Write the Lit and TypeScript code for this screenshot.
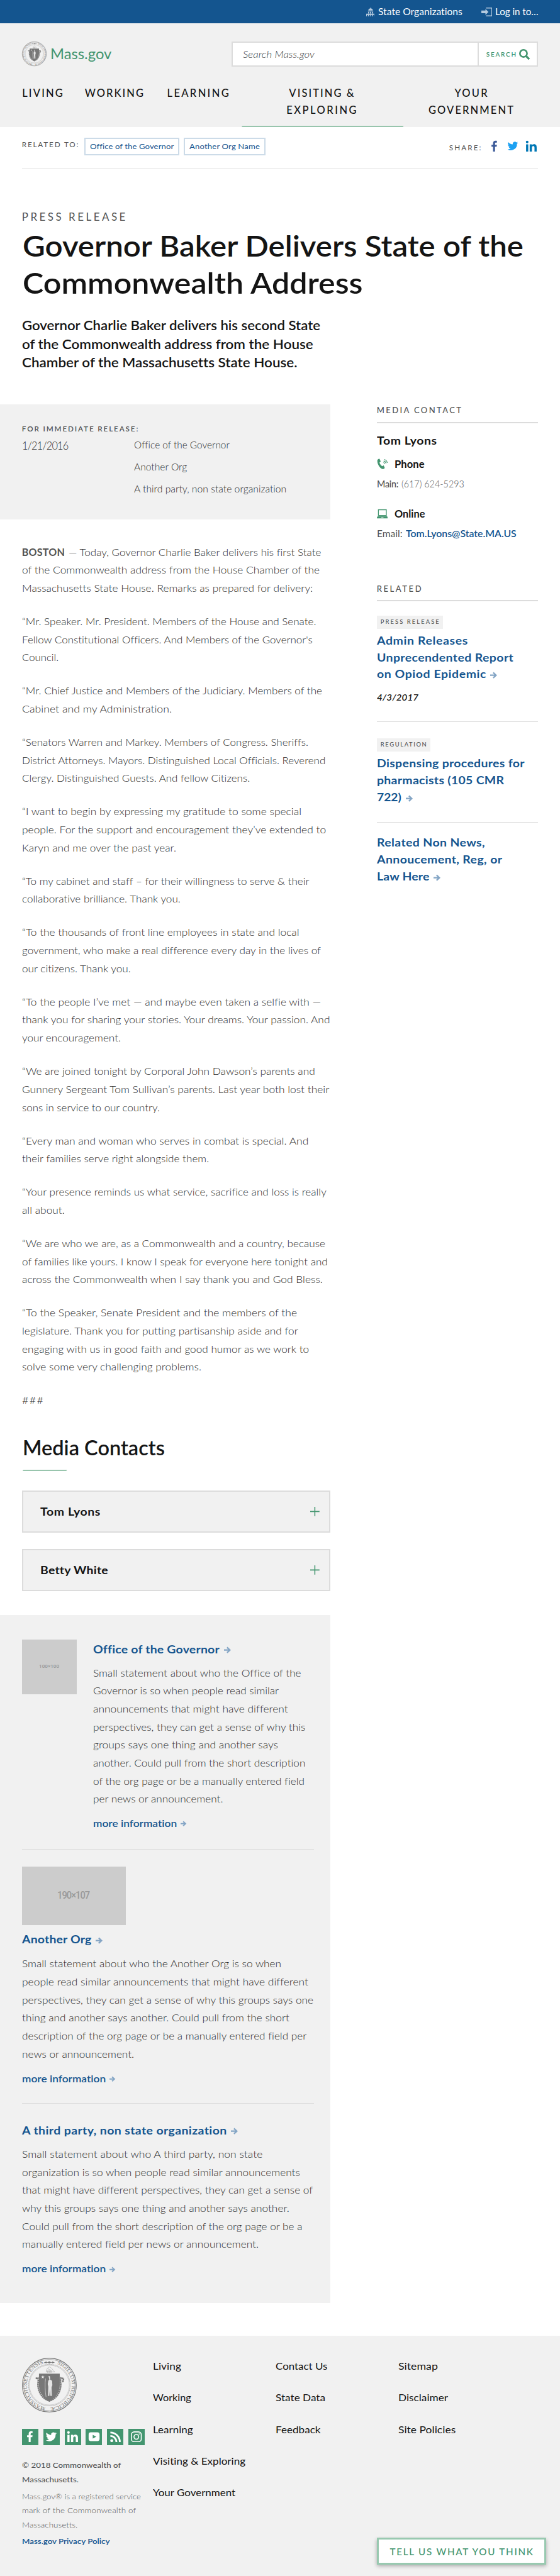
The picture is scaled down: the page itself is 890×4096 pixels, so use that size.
import { LitElement, html, css, nothing, TemplateResult } from "lit";
import { customElement, property } from "lit/decorators.js";

type Line = [string, number];

/** One line of text fitted to a set measure: capitals are tracked, mixed case is widened. */
@customElement("fit-line")
class FitLine extends LitElement {
  @property() text = "";
  @property({ type: Number }) w = 0;
  static styles = css`
    :host { display: block; white-space: nowrap; font-variant-ligatures: none; }
    .in { display: block; width: max-content; transform-origin: 0 50%; }
  `;
  render() { return html`<span class="in">${this.text}</span>`; }
  updated() {
    const inner = this.renderRoot.querySelector(".in") as HTMLElement;
    this.style.width = `${this.w}px`;
    requestAnimationFrame(() => this.fit(inner));
  }
  private fit(inner: HTMLElement) {
    inner.style.letterSpacing = "0.001px";
    inner.style.transform = "none";
    const pad = this.getBoundingClientRect().width;
    if (!pad) return;
    const natural = (inner.getBoundingClientRect().width / pad) * this.w;
    const gaps = Math.max(1, this.text.length - 1);
    const caps = this.text === this.text.toUpperCase() && /[A-Z]{3}/.test(this.text);
    if (caps) {
      inner.style.letterSpacing = `${((this.w - natural) / gaps).toFixed(3)}px`;
      return;
    }
    const stretch = Math.min(1.12, Math.max(0.94, this.w / natural));
    inner.style.letterSpacing = `${((this.w / stretch - natural) / gaps).toFixed(3)}px`;
    inner.style.transform = `scaleX(${stretch.toFixed(4)})`;
  }
}

const t = (text: string, w: number, cls = "") =>
  html`<fit-line class=${cls} .text=${text} .w=${w}></fit-line>`;

const arrow = (size: number) => html`<svg class="arrow" width=${size} height=${size} viewBox="0 0 14 14">
  <path d="M0 7h11M6 1.8 11.6 7 6 12.2" fill="none" stroke="currentColor" stroke-width="2.8"/></svg>`;

const FB = "M13.5 22v-9h3l.5-3.6h-3.500V7.200c0-1 .4-1.700 1.800-1.700H17V2.200C16.600 2.100 15.600 2 14.400 2 11.700 2 9.900 3.600 9.900 6.700v2.700H7V13h2.900v9z";
const TW = "M22 5.900c-.7.3-1.500.6-2.400.7.9-.5 1.500-1.300 1.800-2.300-.8.5-1.700.8-2.600 1a4.100 4.100 0 0 0-7 3.700C8.400 8.800 5.400 7.200 3.400 4.700a4.100 4.100 0 0 0 1.300 5.500c-.7 0-1.300-.2-1.900-.5 0 2 1.400 3.700 3.300 4.100-.6.2-1.200.2-1.900.1.500 1.600 2 2.800 3.800 2.900A8.300 8.300 0 0 1 2 18.500 11.700 11.700 0 0 0 20 8c.8-.6 1.500-1.300 2-2.100z";
const IN = "M2.400 8.600h4V22h-4zM4.400 2a2.400 2.400 0 1 1 0 4.800 2.400 2.400 0 0 1 0-4.800zM9 8.600h3.900v1.900c.6-1.100 1.900-2.200 4-2.200 4.100 0 4.900 2.700 4.900 6.300V22h-4v-6.600c0-1.600 0-3.600-2.200-3.600-2.200 0-2.500 1.700-2.500 3.500V22H9z";

const glyph = (d: string, size = 24) =>
  html`<svg width=${size} height=${size} viewBox="0 0 24 24" fill="currentColor"><path d=${d}/></svg>`;

const seal = (size: number, id: string) => html`
  <svg class="seal" width=${size} height=${size} viewBox="0 0 100 100">
    <circle cx="50" cy="50" r="49.300" fill="none" stroke="#777" stroke-width="1.300"/>
    <circle cx="50" cy="50" r="47" fill="none" stroke="#777" stroke-width=".7"/>
    <circle cx="50" cy="50" r="38" fill="none" stroke="#8a8a8a" stroke-width="1" stroke-dasharray="1 .7"/>
    <circle cx="50" cy="50" r="36.500" fill="none" stroke="#999" stroke-width=".5"/>
    <defs>
      <path id=${id} d="M50 91A41 41 0 1 1 50.100 91"/>
    </defs>
    <text class="legend"><textPath href=${"#" + id} startOffset="7" textLength="113">MASSACHUSETTENSIS.</textPath></text>
    <text class="legend"><textPath href=${"#" + id} startOffset="143" textLength="112">SIGILLUM REIPUBLICÆ</textPath></text>
    <path d="M40 8.500l5-2v1.500h2.500a3 3 0 0 1 5 0H55V6.500l5 2-5 2V9h-2.500a3 3 0 0 1-5 0H45v1.500z" fill="#777"/>
    <path d="M44 26c1-5 3-8 5-9 3-1 6 3 8 6l3 3zM45 24h10M47 20l6 3" fill="none" stroke="#aaa" stroke-width=".8"/>
    <path d="M46 26h8" stroke="#777" stroke-width="1.500" stroke-dasharray="2 1"/>
    <path d="M25 38l4-1 1 6c-2 8 0 17 5 25 4 6 10 9 15 11 5-2 11-5 15-11 5-8 7-17 5-25l1-6 5 1-1 5-2 1" fill="none" stroke="#777" stroke-width="3" stroke-dasharray="3 .6"/>
    <path d="M31 29h38v21c0 13-8 24-19 30-11-6-19-17-19-30z" fill="#777"/>
    <path d="M38 32l.8 2.200h2.400l-1.900 1.500.7 2.300-2-1.400-2 1.400.7-2.300-1.900-1.500h2.400z" fill="#f1f1f1"/>
    <path d="M48.500 33l2.500 1 .5 6 3.500 2 .5 8-1.500 4 .5 16h-2.500l-1-13-1 13h-2.500l.5-17-1-5 1-6 2-2z" fill="#e4e4e4"/>
    <path d="M43 38q-2 15 1 34" fill="none" stroke="#ddd" stroke-width=".8"/>
  </svg>`;

const SPEECH: Line[][] = [
  [["of the Commonwealth address from the House Chamber of the", 544.500], ["Massachusetts State House. Remarks as prepared for delivery:", 532]],
  [["“Mr. Speaker. Mr. President. Members of the House and Senate.", 538], ["Fellow Constitutional Officers. And Members of the Governor's", 531.500], ["Council.", 67]],
  [["“Mr. Chief Justice and Members of the Judiciary. Members of the", 549], ["Cabinet and my Administration.", 274]],
  [["“Senators Warren and Markey. Members of Congress. Sheriffs.", 523.700], ["District Attorneys. Mayors. Distinguished Local Officials. Reverend", 555], ["Clergy. Distinguished Guests. And fellow Citizens.", 416.800]],
  [["“I want to begin by expressing my gratitude to some special", 511], ["people. For the support and encouragement they’ve extended to", 556], ["Karyn and me over the past year.", 282]],
  [["“To my cabinet and staff – for their willingness to serve & their", 525.400], ["collaborative brilliance. Thank you.", 289.800]],
  [["“To the thousands of front line employees in state and local", 507], ["government, who make a real difference every day in the lives of", 546.600], ["our citizens. Thank you.", 198.800]],
  [["“To the people I’ve met — and maybe even taken a selfie with —", 547], ["thank you for sharing your stories. Your dreams. Your passion. And", 563.300], ["your encouragement.", 180.800]],
  [["“We are joined tonight by Corporal John Dawson’s parents and", 536], ["Gunnery Sergeant Tom Sullivan’s parents. Last year both lost their", 562], ["sons in service to our country.", 252]],
  [["“Every man and woman who serves in combat is special. And", 524], ["their families serve right alongside them.", 342]],
  [["“Your presence reminds us what service, sacrifice and loss is really", 556.800], ["all about.", 78]],
  [["“We are who we are, as a Commonwealth and a country, because", 554.700], ["of families like yours. I know I speak for everyone here tonight and", 559], ["across the Commonwealth when I say thank you and God Bless.", 550]],
  [["“To the Speaker, Senate President and the members of the", 503], ["legislature. Thank you for putting partisanship aside and for", 505], ["engaging with us in good faith and good humor as we work to", 525], ["solve some very challenging problems.", 328]],
  [["###", 39]],
];

const ORG1: Line[] = [
  ["Small statement about who the Office of the", 380.500], ["Governor is so when people read similar", 339.700],
  ["announcements that might have different", 356.400], ["perspectives, they can get a sense of why this", 388.200],
  ["groups says one thing and another says", 338.400], ["another. Could pull from the short description", 388.200],
  ["of the org page or be a manually entered field", 386.600], ["per news or announcement.", 237.600]];
const ORG2: Line[] = [
  ["Small statement about who the Another Org is so when", 474.300], ["people read similar announcements that might have different", 523.700],
  ["perspectives, they can get a sense of why this groups says one", 533], ["thing and another says another. Could pull from the short", 489],
  ["description of the org page or be a manually entered field per", 520.500], ["news or announcement.", 205]];
const ORG3: Line[] = [
  ["Small statement about who A third party, non state", 440], ["organization is so when people read similar announcements", 508.600],
  ["that might have different perspectives, they can get a sense of", 532], ["why this groups says one thing and another says another.", 489],
  ["Could pull from the short description of the org page or be a", 512.700], ["manually entered field per news or announcement.", 432.700]];

@customElement("app-root")
class AppRoot extends LitElement {
  static styles = css`
    :host { display: block; zoom: 0.869; width: 1024.200px; height: 4714px; position: relative; overflow: hidden;
      background: #fff; color: #535353; font-family: Lato, "Open Sans", sans-serif; font-size: 18.500px; line-height: 33px; }
    * { box-sizing: border-box; }
    svg { display: block; flex: none; }
    fit-line { flex: none; }
    .b { font-weight: 700; }

    .top { height: 43px; background: #14558f; color: #fff; display: flex; justify-content: flex-end; align-items: center;
      padding-right: 40px; font-size: 17px; line-height: 43px; }
    .top svg { color: #b5cade; }
    .top .org { margin: 0 35px 0 6px; }
    .top .log { margin-left: 5px; }

    .head { height: 190px; background: #f1f1f1; padding: 33px 40px 0; }
    .brand { display: flex; height: 46px; align-items: center; }
    .name { color: #43956f; font-size: 26px; line-height: 46px; margin: 0 220px 0 7px; padding-top: 1px; }
    .search { display: flex; width: 560px; height: 46px; border: 2.400px solid #dcdcdc; background: #fff; }
    .field { width: 449px; border-right: 2.400px solid #dcdcdc; padding: 0 0 0 18px; font-style: italic; font-weight: 300; font-size: 17.500px; line-height: 42px; color: #444; }
    .go { display: flex; color: #43956f; padding: 0 0 0 14px; font-size: 11.500px; line-height: 42px; font-weight: 600; }
    .go svg { margin: 11px 0 0 6px; }
    .nav { display: grid; grid-template-columns: 114.500px 150.600px 136.400px 297px 1fr; margin-top: 33.800px; color: #141414;
      font-size: 19px; line-height: 31px; font-weight: 500; }
    .nav > fit-line { margin-left: .5px; }
    .two { display: flex; flex-direction: column; align-items: center; padding-right: 4px; }
    .two.last { padding: 0 0 0 0; }
    .mark { align-self: flex-start; width: 297px; height: 3px; background: #98c5ad; margin-top: 12.200px; clip-path: polygon(2px 0, 100% 0, calc(100% - 2px) 100%, 0 100%); }

    .rel { display: flex; align-items: flex-start; height: 77px; margin: 0 40px; border-bottom: 1px solid #dcdcdc; padding-top: 19px;
      font-size: 13.500px; line-height: 20px; }
    .rt { margin-top: 1.800px; }
    .chip { border: 2.400px solid #ccdbe8; height: 32px; line-height: 27.500px; color: #14558f; padding: 0 8px; margin-left: 8px; font-weight: 400; }
    .rt + .chip { margin-left: 11px; }
    .share { margin: 7.800px 12.500px 0 auto; }
    .soc { width: 24px; margin-top: 4px; }
    .soc.fb { color: #3b5998; margin-right: 10px; }
    .soc.tw { color: #1da1f2; margin-right: 10px; }
    .soc.li { color: #0077b5; }

    .intro { padding: 72.500px 40px 0; color: #141414; height: 430px; }
    .kind { font-size: 19.500px; line-height: 30px; color: #535353; }
    .title { font-size: 53px; line-height: 68px; margin: 3px 0 0 1px; font-weight: 600; }
    .lead { font-size: 24px; line-height: 34px; margin-top: 26.500px; font-weight: 600; }

    .cols { display: grid; grid-template-columns: 604px 295px; column-gap: 85px; }
    .release { height: 210px; background: #f1f1f1; padding: 34.800px 0 0 40px; }
    .release .lab { font-size: 13.500px; line-height: 20px; font-weight: 600; }
    .rr { display: flex; }
    .date { font-size: 20px; line-height: 30px; margin: 5.700px 120px 0 0; font-weight: 300; color: #333; }
    .orgs { font-size: 17.500px; line-height: 40px; margin-top: -.6px; font-weight: 300; color: #2c2c2c; }

    .speech, .txt { font-weight: 300; color: #2c2c2c; }
    .speech { padding: 44px 0 0 40px; }
    .para { margin-bottom: 28px; }
    .row { display: flex; gap: 7.500px; }
    .row .b { color: #535353; }
    .mc { padding: 21px 0 0 41px; color: #141414; font-size: 37px; line-height: 44px; font-weight: 600; }
    .under { width: 82px; height: 3px; background: #98c5ad; margin: 17.300px 0 35px; clip-path: polygon(2px 0, 100% 0, calc(100% - 2px) 100%, 0 100%); }
    .acc { display: flex; justify-content: space-between; align-items: center; margin: 0 0 30px 40px; height: 77px; border: 2.400px solid #dcdcdc;
      background: #f1f1f1; color: #141414; font-size: 20px; line-height: 72.500px; font-weight: 700; padding: 0 17px 0 31px; }
    .panel { background: #f1f1f1; height: 1259px; margin-top: 44px; padding: 45px 30px 0 40px; }
    .ph { background: #ccc; color: #999; display: flex; align-items: center; justify-content: center; flex: none;
      font-family: Roboto, sans-serif; font-weight: 500; }
    .ph.s { width: 100px; height: 100px; font-size: 9px; }
    .ph.l { width: 190px; height: 107px; font-size: 18px; }
    .one { display: flex; gap: 30.200px; height: 384px; border-bottom: 1px solid #dcdcdc; }
    .one .link { margin-top: 3px; }
    .link { display: flex; align-items: center; gap: 8px; color: #14558f; font-weight: 700; font-size: 20px; line-height: 30px; }
    .more { display: flex; align-items: center; gap: 7px; color: #14558f; font-weight: 600; font-size: 18px; line-height: 30px; margin-top: 13px; }
    .arrow { color: #84a5c5; margin-top: 2px; }
    .txt { margin-top: 11.500px; }
    .second { height: 465.800px; padding-top: 31px; border-bottom: 1px solid #dcdcdc; }
    .second .link { margin-top: 12.600px; }
    .second .txt { margin-top: 12.500px; }
    .third { padding-top: 34.200px; }

    .side .hd { font-size: 15px; line-height: 20px; font-weight: 500; border-bottom: 2.400px solid #dcdcdc; padding-bottom: 10.500px; margin-top: 1.200px; }
    .side .who { font-size: 20px; line-height: 30px; font-weight: 700; color: #141414; margin-top: 17.400px; }
    .sub { display: flex; align-items: center; font-size: 18.500px; line-height: 30px; font-weight: 700; color: #141414; margin-top: 12.600px; }
    .sub svg { margin-right: 12px; }
    .val { display: flex; gap: 6px; font-size: 17.500px; line-height: 30px; margin-top: 6.200px; }
    .lt { font-weight: 300; }
    .md { font-weight: 500; }
    .val + .sub { margin-top: 24.800px; }
    .blue { color: #14558f; font-weight: 600; }
    .side .hd.two2 { margin-top: 76.400px; }
    .item { border-bottom: 1px solid #dcdcdc; color: #14558f; font-weight: 700; font-size: 20px; line-height: 31px; padding-top: 26px; }
    .item.a { height: 221px; } .item.b2 { height: 183.500px; padding-top: 30px; } .item.c { border: 0; padding-top: 22.300px; }
    .tag { width: max-content; background: #f1f1f1; color: #535353; height: 24px; line-height: 23.500px; padding: 0 7px; font-size: 10.800px;
      font-weight: 500; margin-bottom: 7px; }
    .end { display: flex; align-items: center; gap: 8px; }
    .when { color: #141414; font-style: italic; font-weight: 600; font-size: 15.500px; line-height: 24px; margin-top: 14px; }

    .foot { margin-top: 60px; height: 441px; background: #f1f1f1; padding: 26.300px 40px 0; display: grid;
      grid-template-columns: 240px 224px 225px 1fr; color: #141414; font-weight: 400; font-size: 18.500px; line-height: 58px; }
    .legal { padding-top: 13.700px; font-size: 13.800px; line-height: 26px; color: #535353; font-weight: 500; }
    .seal { overflow: visible; }
    .legend { font-family: "Liberation Serif", serif; font-size: 10px; fill: #777; }
    .squares { display: flex; gap: 9px; margin: 30px 0 24.600px; }
    .sq { width: 30px; height: 30px; background: #43956f; color: #fff; display: flex; align-items: center; justify-content: center; }
    .reg { font-weight: 300; color: #555; margin: 5px 0 4px; }
    .feedback { position: absolute; left: 689px; top: 4643px; width: 310px; height: 50px; border: 3.500px solid #98c9b0; background: #fff;
      color: #43956f; font-size: 17.500px; line-height: 44px; font-weight: 500; padding-left: 20.500px; box-shadow: 0 4px 7px rgba(0,0,0,.3); }
  `;

  plus(): TemplateResult {
    return html`<svg width="17" height="17" viewBox="0 0 17 17"><path d="M0 8.500h17M8.500 0v17" stroke="#43956f" stroke-width="1.800"/></svg>`;
  }
  lines(ls: Line[]) { return ls.map(([s, w]) => t(s, w)); }
  more() { return html`<div class="more">${t("more information", 153.300)}${arrow(11)}</div>`; }

  render() {
    return html`
      <div class="top">
        <svg width="16" height="16" viewBox="0 0 16 16" fill="currentColor"><path d="M7.500 0h1v1.300A4.300 4.300 0 0 1 12.200 5.400H3.800A4.300 4.300 0 0 1 7.500 1.300zM3 6.200h10v1H3zM3.500 7.800h2v3h-2zM7 7.800h2v3H7zM10.500 7.800h2v3h-2zM0 11.200h16V16h-1.500v-2.500h-2V16h-1.700v-2.500h-2V16H7.200v-2.500h-2V16H3.500v-2.500h-2V16H0z"/></svg>
        ${t("State Organizations", 154, "org")}
        <svg width="20" height="16" viewBox="0 0 20 16" fill="none" stroke="currentColor"><path d="M8.500 .8h10.700v14.400H8.500" stroke-width="1.600"/><path d="M0 5.500h7.500V2.500L13 8l-5.500 5.500v-3H0z" fill="currentColor" stroke="none"/></svg>
        ${t("Log in to…", 79, "log")}
      </div>
      <div class="head">
        <div class="brand">
          ${seal(45, "ring-a")}${t("Mass.gov", 112, "name")}
          <div class="search">
            <div class="field">${t("Search Mass.gov", 131)}</div>
            <div class="go">${t("SEARCH", 54.500)}
              <svg width="20" height="20" viewBox="0 0 20 20" fill="none" stroke="currentColor"><circle cx="8" cy="8" r="6.500" stroke-width="3"/><path d="M12.500 12.500l6 6" stroke-width="3.800"/></svg>
            </div>
          </div>
        </div>
        <div class="nav">
          ${t("LIVING", 74.500)}${t("WORKING", 107.500)}${t("LEARNING", 113)}
          <div class="two">${t("VISITING &", 118.800)}${t("EXPLORING", 128)}<div class="mark"></div></div>
          <div class="two last">${t("YOUR", 60)}${t("GOVERNMENT", 155.500)}</div>
        </div>
      </div>
      <div class="rel">
        ${t("RELATED TO:", 103.200, "rt")}
        <div class="chip">${t("Office of the Governor", 153.400)}</div>
        <div class="chip">${t("Another Org Name", 128.800)}</div>
        ${t("SHARE:", 58.500, "share")}
        <div class="soc fb">${glyph(FB)}</div>
        <div class="soc tw">${glyph(TW, 23)}</div>
        <div class="soc li">${glyph(IN)}</div>
      </div>
      <div class="intro">
        ${t("PRESS RELEASE", 189.500, "kind")}
        <div class="title">${t("Governor Baker Delivers State of the", 916)}${t("Commonwealth Address", 622)}</div>
        <div class="lead">${t("Governor Charlie Baker delivers his second State", 545.500)}${t("of the Commonwealth address from the House", 532.500)}${t("Chamber of the Massachusetts State House.", 503.500)}</div>
      </div>
      <div class="cols">
        <div>
          <div class="release">
            ${t("FOR IMMEDIATE RELEASE:", 212.500, "lab")}
            <div class="rr">${t("1/21/2016", 85.500, "date")}
              <div class="orgs">${t("Office of the Governor", 174.800)}${t("Another Org", 97)}${t("A third party, non state organization", 278.800)}</div>
            </div>
          </div>
          <div class="speech">
            ${SPEECH.map((p, i) => html`<div class="para">
              ${i === 0 ? html`<div class="row">${t("BOSTON", 78.500, "b")}${t("— Today, Governor Charlie Baker delivers his first State", 462)}</div>` : nothing}
              ${this.lines(p)}</div>`)}
          </div>
          <div class="mc">${t("Media Contacts", 260)}<div class="under"></div></div>
          <div class="acc">${t("Tom Lyons", 109.800)}${this.plus()}</div>
          <div class="acc">${t("Betty White", 124)}${this.plus()}</div>
          <div class="panel">
            <div class="one">
              <div class="ph s">${t("100×100", 37)}</div>
              <div>
                <div class="link">${t("Office of the Governor", 231)}${arrow(13)}</div>
                <div class="txt">${this.lines(ORG1)}</div>${this.more()}
              </div>
            </div>
            <div class="second">
              <div class="ph l">${t("190×107", 60)}</div>
              <div class="link">${t("Another Org", 127)}${arrow(13)}</div>
              <div class="txt">${this.lines(ORG2)}</div>${this.more()}
            </div>
            <div class="third">
              <div class="link">${t("A third party, non state organization", 374.300)}${arrow(13)}</div>
              <div class="txt">${this.lines(ORG3)}</div>${this.more()}
            </div>
          </div>
        </div>
        <div class="side">
          <div class="hd">${t("MEDIA CONTACT", 154.500)}</div>
          ${t("Tom Lyons", 109.500, "who")}
          <div class="sub">
            <svg width="20" height="20" viewBox="0 0 20 20"><path d="M1.500 2C2.500.8 4 .5 4.800.6L7 5.500 4.800 7.500c.5 2.500 2.700 5.300 5 6.700l2.600-1.500 2 4.500c-.8 1.500-2.700 2.600-4.400 2C4.500 17.500.5 9 .8 4c0-.8.2-1.500.7-2z" fill="#43956f"/><path d="M12 7.500c1.200.2 2 1 2.300 2.300M12.300 4.800c2.400.3 4 1.800 4.500 4.200M12.700 2c3.500.3 5.800 2.500 6.300 6" fill="none" stroke="#43956f" stroke-width="1.300"/></svg>
            ${t("Phone", 54.700)}
          </div>
          <div class="val">${t("Main:", 39.600, "md")}${t("(617) 624-5293", 115, "lt")}</div>
          <div class="sub">
            <svg width="20" height="18" viewBox="0 0 20 18"><path d="M2 1h16v12H2zM3.500 2.500v9h13v-9z" fill="#43956f" fill-rule="evenodd"/><path d="M1.500 13.500h17L20 16v1.500H0V16z" fill="#43956f"/><path d="M8 16h4" stroke="#fff" stroke-width="1"/></svg>
            ${t("Online", 55.700)}
          </div>
          <div class="val">${t("Email:", 46.700)}${t("Tom.Lyons@State.MA.US", 202.300, "blue")}</div>
          <div class="hd two2">${t("RELATED", 81.500)}</div>
          <div class="item a">
            <div class="tag">${t("PRESS RELEASE", 107)}</div>
            ${t("Admin Releases", 166)}${t("Unprecendented Report", 249.500)}
            <div class="end">${t("on Opiod Epidemic", 199.600)}${arrow(13)}</div>
            ${t("4/3/2017", 76, "when")}
          </div>
          <div class="item b2">
            <div class="tag">${t("REGULATION", 84)}</div>
            ${t("Dispensing procedures for", 270)}${t("pharmacists (105 CMR", 232.500)}
            <div class="end">${t("722)", 44.700)}${arrow(13)}</div>
          </div>
          <div class="item c">${t("Related Non News,", 197.500)}${t("Annoucement, Reg, or", 229)}
            <div class="end">${t("Law Here", 96)}${arrow(13)}</div>
          </div>
        </div>
      </div>
      <div class="foot">
        <div class="legal">
          ${seal(100, "ring-b")}
          <div class="squares">
            ${[FB, TW, IN].map((d) => html`<div class="sq">${glyph(d)}</div>`)}
            <div class="sq"><svg width="22" height="22" viewBox="0 0 22 22"><rect x="1" y="3" width="20" height="16" rx="4" fill="#fff"/><path d="M8.500 7.500v7l6.500-3.500z" fill="#43956f"/></svg></div>
            <div class="sq"><svg width="20" height="20" viewBox="0 0 20 20" fill="none" stroke="#fff" stroke-width="3.200"><circle cx="3" cy="17" r="2.700" fill="#fff" stroke="none"/><path d="M.5 8.500a11 11 0 0 1 11 11M.5 2.200a17.300 17.300 0 0 1 17.300 17.300"/></svg></div>
            <div class="sq"><svg width="20" height="20" viewBox="0 0 20 20" fill="none" stroke="#fff" stroke-width="1.800"><rect x="1" y="1" width="18" height="18" rx="5"/><circle cx="10" cy="10" r="4.300"/><circle cx="15.200" cy="4.800" r="1" fill="#fff" stroke="none"/></svg></div>
          </div>
          ${t("© 2018 Commonwealth of", 181)}${t("Massachusetts.", 103.500)}
          <div class="reg">${t("Mass.gov® is a registered service", 217.500)}${t("mark of the Commonwealth of", 208.500)}${t("Massachusetts.", 101.500)}</div>
          ${t("Mass.gov Privacy Policy", 160.500, "blue")}
        </div>
        <div>${t("Living", 51.700)}${t("Working", 70)}${t("Learning", 73.300)}${t("Visiting & Exploring", 169.300)}${t("Your Government", 151)}</div>
        <div>${t("Contact Us", 94.800)}${t("State Data", 91)}${t("Feedback", 82.400)}</div>
        <div>${t("Sitemap", 72.300)}${t("Disclaimer", 91)}${t("Site Policies", 105)}</div>
      </div>
      <div class="feedback">${t("TELL US WHAT YOU THINK", 261.800)}</div>
    `;
  }
}
